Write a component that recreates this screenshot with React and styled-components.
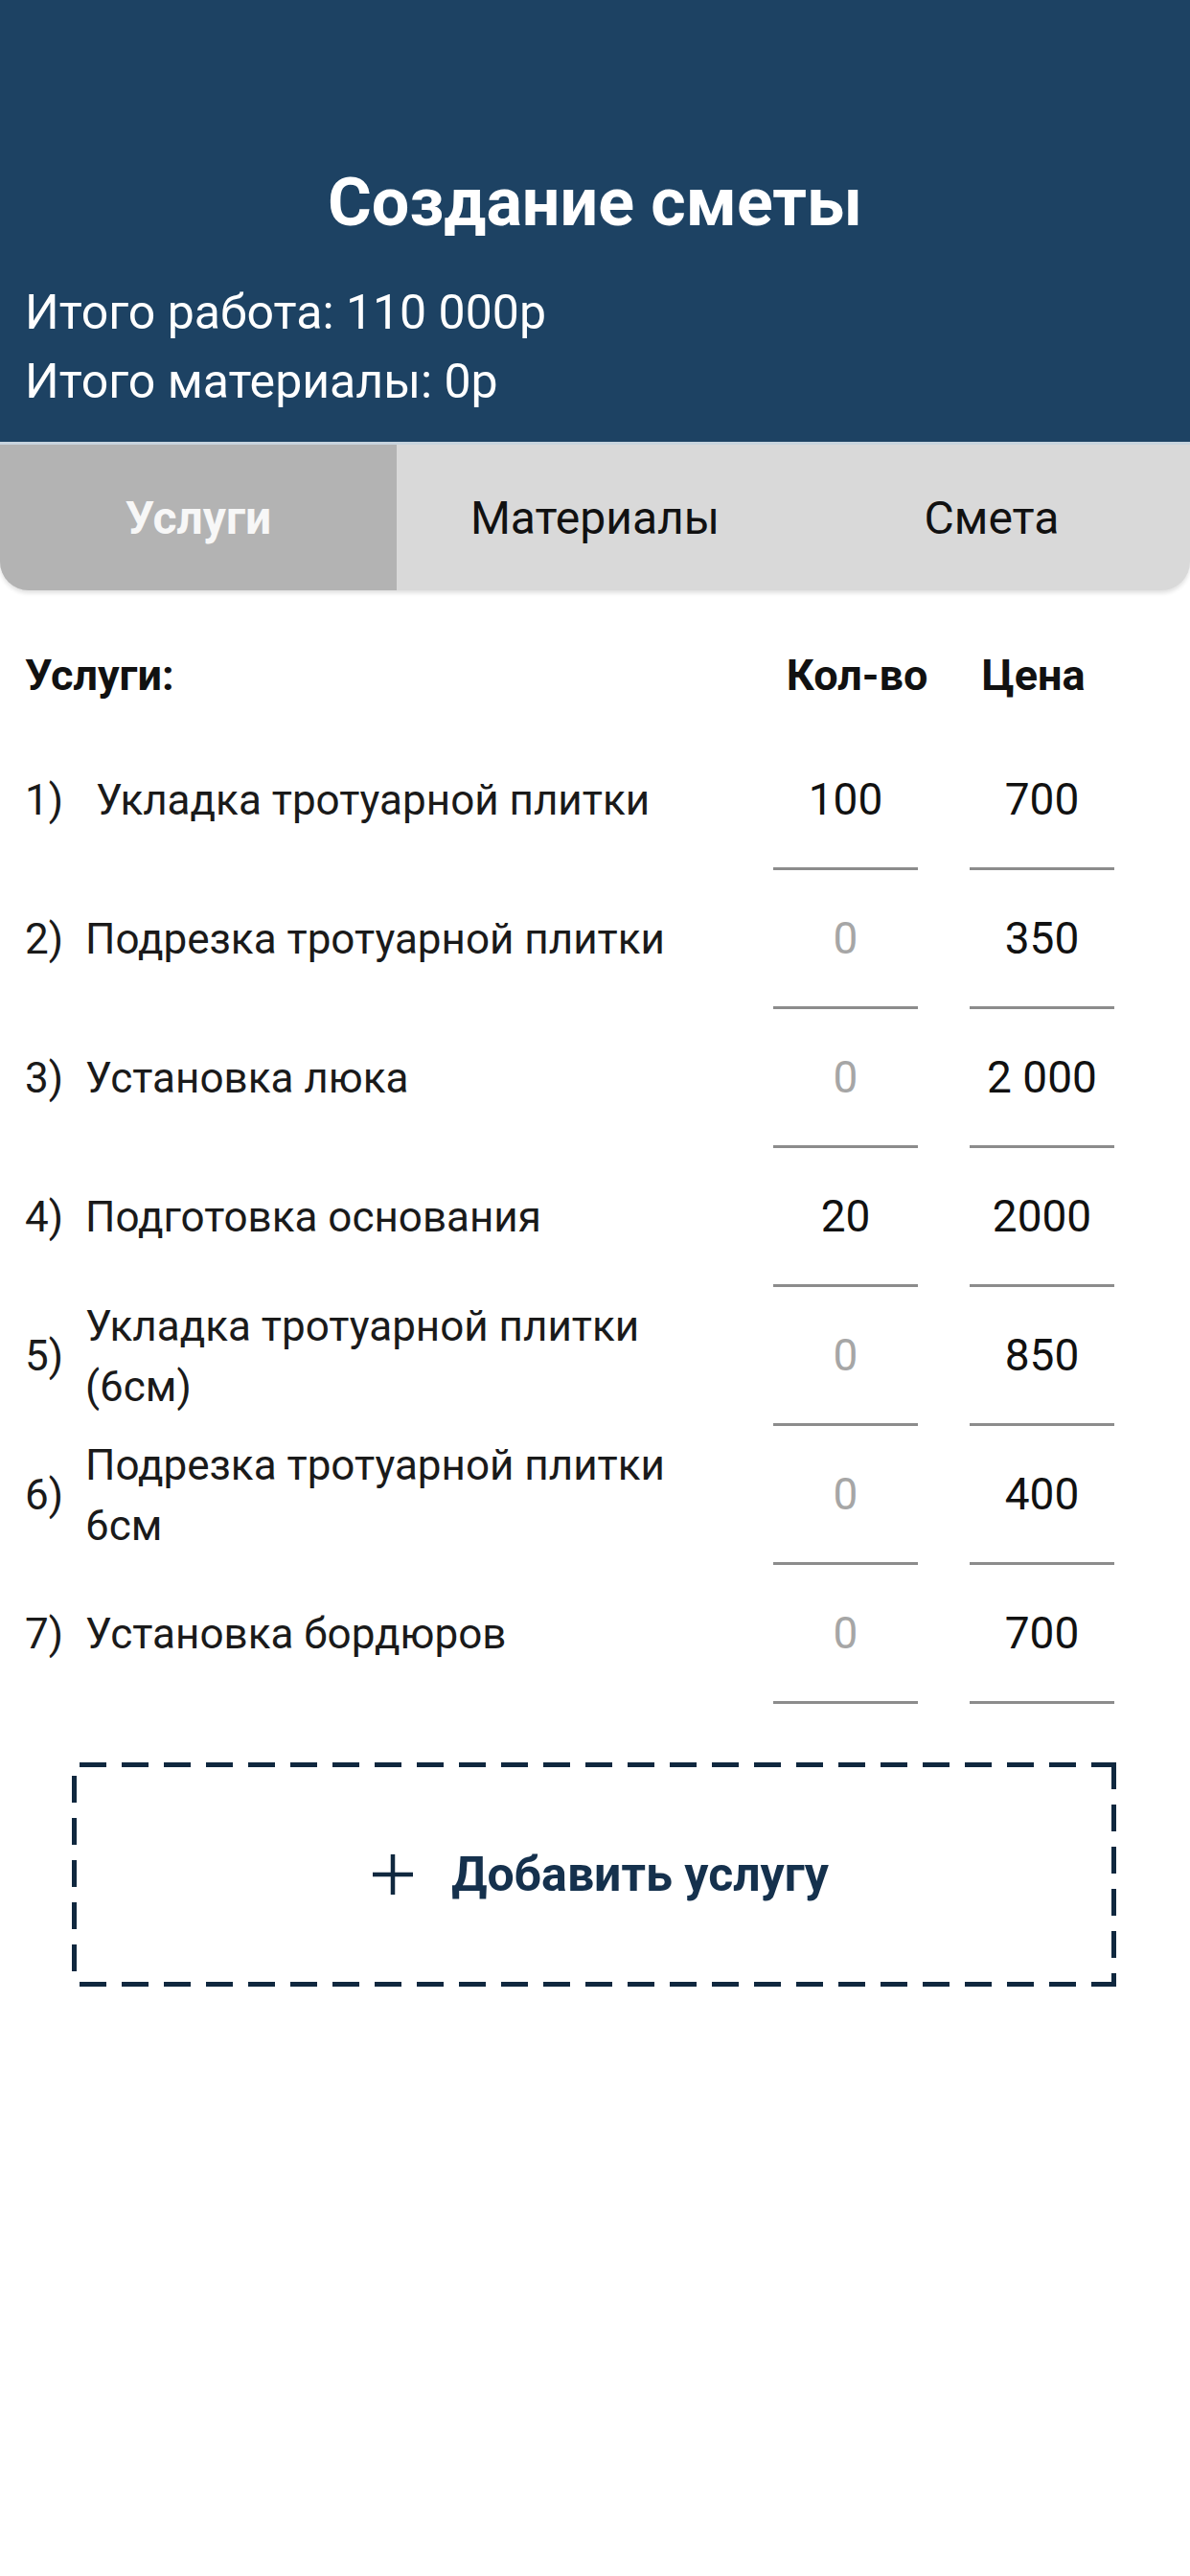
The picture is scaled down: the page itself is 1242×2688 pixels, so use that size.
import styled, { createGlobalStyle } from 'styled-components'

const GlobalStyle = createGlobalStyle`
  body {
    margin: 0;
    background: #fff;
    font-family: Roboto, "Noto Sans", sans-serif;
  }
  * { box-sizing: border-box; }
`

const Screen = styled.div`
  width: 1242px;
  min-height: 2688px;
  background: #fff;
`

const Header = styled.header`
  background: #1d4263;
  color: #fff;
  padding: 171px 26px 27px;
`

const Title = styled.h1`
  margin: 0 0 39px;
  font-size: 70px;
  line-height: 80px;
  font-weight: 700;
  text-align: center;
`

const Total = styled.p`
  margin: 0;
  font-size: 50px;
  line-height: 72px;
`

const Tabs = styled.nav`
  display: grid;
  grid-template-columns: repeat(3, 1fr);
  height: 155px;
  border-top: 3px solid #c8d4de;
  border-radius: 0 0 30px 30px;
  overflow: hidden;
  background: #d9d9d9;
  box-shadow: 0 3px 4px rgba(0, 0, 0, 0.12);
`

const Tab = styled.div`
  display: flex;
  align-items: center;
  justify-content: center;
  font-size: 48px;
  font-weight: ${p => (p.$active ? 700 : 400)};
  color: ${p => (p.$active ? '#f7f7f7' : '#111')};
  background: ${p => (p.$active ? '#b3b3b3' : 'transparent')};
`

const Content = styled.section`
  padding: 38px 79px 0 26px;
`

const HeadRow = styled.div`
  display: flex;
  align-items: center;
  height: 100px;
  margin-bottom: 9px;
  font-size: 45px;
  font-weight: 700;
  color: #111;
  white-space: nowrap;
`

const HeadName = styled.div`
  flex: 1;
`

const HeadCol = styled.div`
  width: 151px;
  display: flex;
  justify-content: center;
  margin-left: ${p => p.$gap || 0}px;
  transform: translateX(${p => p.$shift || 0}px);
`

const Row = styled.div`
  display: flex;
  align-items: stretch;
  height: 145px;
  color: #1a1a1a;
  font-size: 44px;
`

const Num = styled.span`
  width: 63px;
  align-self: center;
  line-height: 63px;
`

const Name = styled.span`
  flex: 1;
  align-self: center;
  padding-right: 50px;
  line-height: 63px;
`

const Value = styled.div`
  width: 151px;
  margin-left: ${p => p.$gap || 0}px;
  display: flex;
  align-items: center;
  justify-content: center;
  border-bottom: 3px solid #8c8c8c;
  font-size: 46px;
  color: ${p => (p.$empty ? '#a6a6a6' : '#111')};
`

const dash = (deg) =>
  `repeating-linear-gradient(${deg}deg, #10283f 0 28px, transparent 28px 44px)`

const AddButton = styled.button`
  display: flex;
  align-items: center;
  justify-content: center;
  gap: 40px;
  width: 1090px;
  height: 234px;
  margin: 61px 0 0 75px;
  padding: 0 0 0 14px;
  border: none;
  font-family: inherit;
  font-size: 50px;
  font-weight: 700;
  color: #15314d;
  background:
    ${dash(90)} 8px 0 / calc(100% - 8px) 5px no-repeat,
    ${dash(90)} 8px 100% / calc(100% - 8px) 5px no-repeat,
    ${dash(180)} 0 14px / 5px calc(100% - 14px) no-repeat,
    ${dash(180)} 100% 0 / 5px 100% no-repeat;
`

const PlusIcon = () => (
  <svg width="42" height="42" viewBox="0 0 42 42">
    <path d="M21 0V42M0 21H42" stroke="#10283f" strokeWidth="4.5" fill="none" />
  </svg>
)

const services = [
  { name: '\u00a0Укладка тротуарной плитки', qty: '100', price: '700' },
  { name: 'Подрезка тротуарной плитки', qty: '0', price: '350' },
  { name: 'Установка люка', qty: '0', price: '2 000' },
  { name: 'Подготовка основания', qty: '20', price: '2000' },
  { name: 'Укладка тротуарной плитки (6см)', qty: '0', price: '850' },
  { name: 'Подрезка тротуарной плитки 6см', qty: '0', price: '400' },
  { name: 'Установка бордюров', qty: '0', price: '700' },
]

export default function App() {
  return (
    <Screen>
      <GlobalStyle />
      <Header>
        <Title>Создание сметы</Title>
        <Total>Итого работа: 110 000р</Total>
        <Total>Итого материалы: 0р</Total>
      </Header>
      <Tabs>
        <Tab $active>Услуги</Tab>
        <Tab>Материалы</Tab>
        <Tab>Смета</Tab>
      </Tabs>
      <Content>
        <HeadRow>
          <HeadName>Услуги:</HeadName>
          <HeadCol $shift={12}>Кол-во</HeadCol>
          <HeadCol $gap={54} $shift={-9}>Цена</HeadCol>
        </HeadRow>
        {services.map((s, i) => (
          <Row key={i}>
            <Num>{i + 1})</Num>
            <Name>{s.name}</Name>
            <Value $empty={s.qty === '0'}>{s.qty}</Value>
            <Value $gap={54}>{s.price}</Value>
          </Row>
        ))}
      </Content>
      <AddButton>
        <PlusIcon />
        Добавить услугу
      </AddButton>
    </Screen>
  )
}
